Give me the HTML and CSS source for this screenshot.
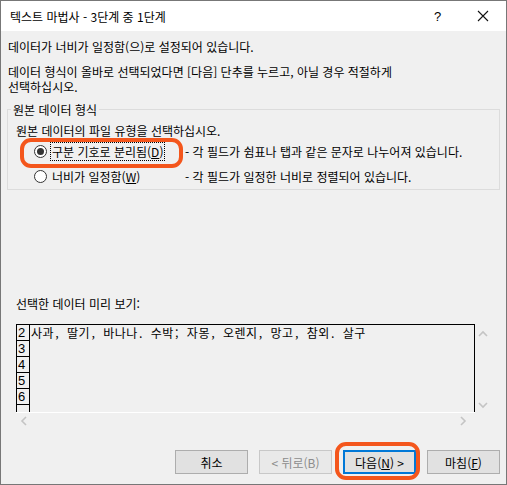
FILE: index.html
```html
<!DOCTYPE html>
<html lang="ko">
<head>
  <meta charset="UTF-8" />
  <title>텍스트 마법사 - 3단계 중 1단계</title>
  <link rel="stylesheet" href="styles.css">
</head>
<body>

  <div class="window">
    <div class="titlebar">
      <span class="title">텍스트 마법사 - 3단계 중 1단계</span>
      <span class="help">?</span>
      <span class="close">
        <svg width="12" height="12" viewBox="0 0 12 12"><path d="M1 1 L11 11 M11 1 L1 11" stroke="#111" stroke-width="1.1" fill="none"/></svg>
      </span>
    </div>

    <div class="content">
      <p class="line first">데이터가 너비가 일정함(으)로 설정되어 있습니다.</p>
      <p class="line second">데이터 형식이 올바로 선택되었다면 [다음] 단추를 누르고, 아닐 경우 적절하게<br>선택하십시오.</p>

      <fieldset class="group">
        <legend>원본 데이터 형식</legend>
        <div class="group-text">원본 데이터의 파일 유형을 선택하십시오.</div>
        <div class="radio-row row-one">
          <span class="radio checked"></span>
          <span class="radio-label"><span class="focus">구분 기호로 분리됨(<u>D</u>)</span></span>
          <span class="radio-desc">- 각 필드가 쉼표나 탭과 같은 문자로 나누어져 있습니다.</span>
        </div>
        <div class="radio-row row-two">
          <span class="radio"></span>
          <span class="radio-label"><span class="nofocus">너비가 일정함(<u>W</u>)</span></span>
          <span class="radio-desc">- 각 필드가 일정한 너비로 정렬되어 있습니다.</span>
        </div>
        <div class="mark mark-radio"></div>
      </fieldset>

      <div class="preview-label">선택한 데이터 미리 보기:</div>

      <div class="preview-wrap">
        <div class="preview-col">
          <div class="preview-box">
            <div class="prow"><span class="num">2</span><span class="cell">사과, 딸기, 바나나. 수박; 자몽, 오렌지, 망고, 참외. 살구</span></div>
            <div class="prow"><span class="num">3</span><span class="cell"></span></div>
            <div class="prow"><span class="num">4</span><span class="cell"></span></div>
            <div class="prow"><span class="num">5</span><span class="cell"></span></div>
            <div class="prow"><span class="num">6</span><span class="cell"></span></div>
            <div class="prow"><span class="num"></span><span class="cell"></span></div>
          </div>
          <div class="hscroll">
            <svg width="8" height="10" viewBox="0 0 8 10"><path d="M6 1 L2 5 L6 9" stroke="#c4c4c4" stroke-width="1.6" fill="none"/></svg>
            <svg width="8" height="10" viewBox="0 0 8 10"><path d="M2 1 L6 5 L2 9" stroke="#c4c4c4" stroke-width="1.6" fill="none"/></svg>
          </div>
        </div>
        <div class="vscroll">
          <svg width="10" height="8" viewBox="0 0 10 8"><path d="M1 6 L5 2 L9 6" stroke="#c4c4c4" stroke-width="1.6" fill="none"/></svg>
          <svg width="10" height="8" viewBox="0 0 10 8"><path d="M1 2 L5 6 L9 2" stroke="#c4c4c4" stroke-width="1.6" fill="none"/></svg>
        </div>
      </div>

      <div class="buttons">
        <button class="btn">취소</button>
        <button class="btn disabled">&lt; 뒤로(B)</button>
        <button class="btn default">다음(<u>N</u>) &gt;<span class="mark mark-next"></span></button>
        <button class="btn">마침(<u>F</u>)</button>
      </div>
    </div>
  </div>

</body>
</html>
```

FILE: styles.css
```css
body {
  margin: 0;
  padding: 0;
  background: #f0f0f0;
  font-family: "Noto Sans CJK KR", "Noto Sans", sans-serif;
  font-size: 12px;
  color: #000;
}
.window {
  width: 507px;
  height: 485px;
  box-sizing: border-box;
  border: 1px solid #777;
  background: #f0f0f0;
  display: flex;
  flex-direction: column;
  overflow: hidden;
}
.titlebar {
  height: 30px;
  background: #fff;
  display: flex;
  align-items: center;
  flex-shrink: 0;
}
.title {
  padding-left: 9px;
  flex: 1;
  line-height: 15px;
}
.help {
  width: 14px;
  margin-right: 29px;
  font-family: "Liberation Sans", sans-serif;
  font-size: 13px;
}
.close {
  width: 12px;
  margin-right: 17px;
  display: flex;
}
.content {
  flex: 1;
  position: relative;
}
.line {
  margin: 0;
  padding-left: 7px;
  line-height: 15px;
}
.first {
  margin-top: 8px;
}
.second {
  margin-top: 10px;
}
.group {
  position: relative;
  margin: 8px 6px 0 6px;
  padding: 0 0 4px 0;
  border: 1px solid #dcdcdc;
  min-width: 0;
}
.group legend {
  margin-left: 3px;
  padding: 0 2px;
  line-height: 15px;
}
.group-text {
  margin-top: 6px;
  padding-left: 8px;
  line-height: 15px;
}
.radio-row {
  display: flex;
  align-items: center;
  height: 18px;
  padding-left: 26px;
}
.row-one {
  margin-top: 4px;
}
.row-two {
  margin-top: 7px;
}
.radio {
  width: 11px;
  height: 11px;
  border: 1px solid #333;
  border-radius: 50%;
  background: #fff;
  position: relative;
  flex-shrink: 0;
}
.radio.checked::after {
  content: "";
  position: absolute;
  left: 2px;
  top: 2px;
  width: 7px;
  height: 7px;
  border-radius: 50%;
  background: #333;
}
.radio-label {
  width: 135px;
  margin-left: 3px;
  line-height: 15px;
}
.focus {
  border: 1px dotted #000;
  padding: 0 1px;
}
.nofocus {
  padding: 0 2px;
}
.mark {
  position: absolute;
  border: 4px solid #f4561c;
  border-radius: 11px;
  pointer-events: none;
}
.mark-radio {
  left: 12px;
  top: 21px;
  width: 155px;
  height: 22px;
}
.preview-label {
  margin-top: 106px;
  padding-left: 15px;
  line-height: 15px;
}
.preview-wrap {
  display: flex;
  margin-top: 13px;
  margin-left: 15px;
}
.preview-col {
  width: 459px;
}
.preview-box {
  height: 88px;
  box-sizing: border-box;
  border: 1px solid #000;
  border-bottom: none;
  overflow: hidden;
  background: #f0f0f0;
}
.prow {
  display: flex;
  height: 16px;
  font-family: "Noto Sans Mono CJK KR", "Noto Sans CJK KR", monospace;
  font-size: 12px;
  line-height: 16px;
}
.num {
  border-right: 1px solid #000;
  border-bottom: 1px solid #000;
  box-sizing: border-box;
  width: 13px;
  flex-shrink: 0;
  padding-left: 1px;
  font-family: "Liberation Sans Narrow", "Liberation Sans", sans-serif;
  font-size: 13px;
  line-height: 15px;
}
.cell {
  padding-left: 1px;
  letter-spacing: 0.5px;
  white-space: nowrap;
}
.hscroll {
  height: 16px;
  border-top: 1px solid #fff;
  display: flex;
  align-items: center;
  justify-content: space-between;
  padding: 0 8px 0 4px;
}
.vscroll {
  width: 16px;
  height: 88px;
  display: flex;
  flex-direction: column;
  justify-content: space-between;
  align-items: center;
  padding: 6px 0 3px 0;
  box-sizing: border-box;
}
.buttons {
  display: flex;
  justify-content: flex-end;
  gap: 11px;
  margin-top: 21px;
  padding-right: 6px;
}
.btn {
  position: relative;
  width: 73px;
  height: 24px;
  border: 1px solid #adadad;
  background: #e1e1e1;
  font-family: "Noto Sans CJK KR", "Noto Sans", sans-serif;
  font-size: 12px;
  color: #000;
  padding: 0;
  line-height: 15px;
}
.btn.disabled {
  background: #e9e9e9;
  border-color: #c8c8c8;
  color: #8c8c8c;
}
.btn.default {
  border: 2px solid #0078d7;
}
.mark-next {
  left: -10px;
  top: -10px;
  width: 77px;
  height: 30px;
}
```
